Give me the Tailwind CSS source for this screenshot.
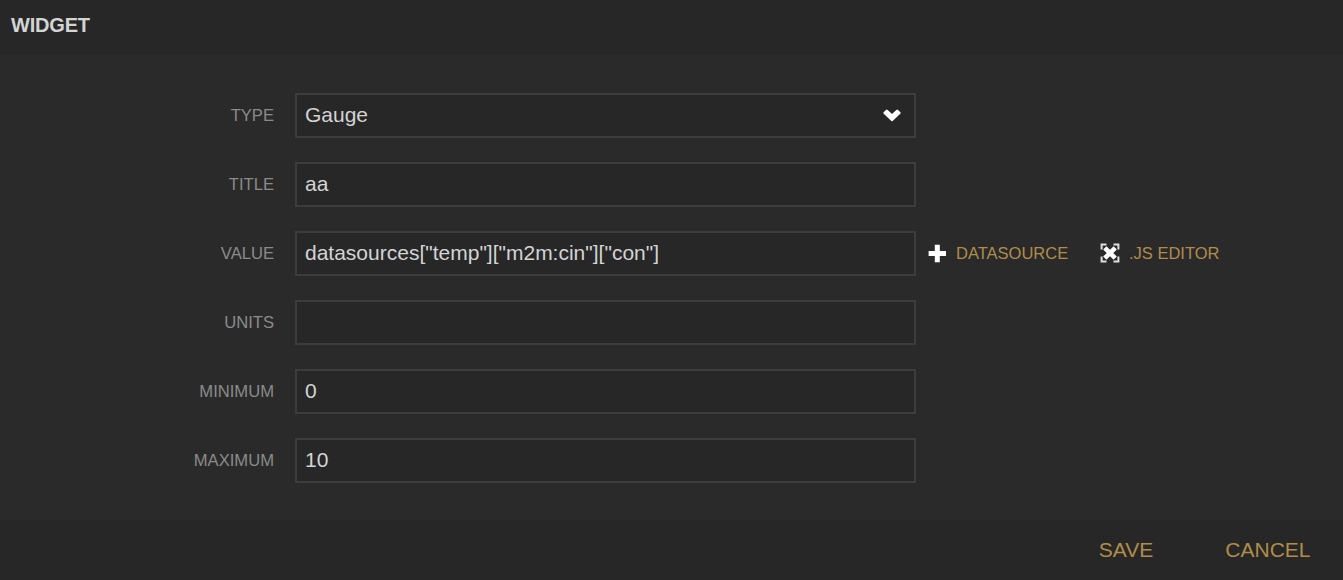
<!DOCTYPE html>
<html lang="en"><head><meta charset="utf-8"><title>Widget</title>
<script src="https://cdn.jsdelivr.net/npm/@tailwindcss/browser@4"></script></head>
<body class="h-[580px] w-[1343px] overflow-hidden bg-[#2a2a2a] font-['Liberation_Sans',Arial,sans-serif] text-[#d3d4d4] flex flex-col">
<header class="h-[55px] bg-[#272727] pl-[11px] pt-[10px]"><h1 class="text-[20px] leading-[30px] font-bold tracking-[-0.2px]">WIDGET</h1></header>
<main class="h-[465px] pt-[38px] flex flex-col gap-6">
<div class="flex h-[45px] items-center"><label class="w-[274px] pt-[2px] text-right text-[16.6px] text-[#8b8b8b]">TYPE</label><div class="ml-[21px] flex h-[45px] w-[621px] items-center justify-between border-2 border-[#3d3d3d] bg-[#272727] pb-[2px] pl-2 pr-3 text-[21px]"><span>Gauge</span><svg class="h-[14px] w-[20px]" viewBox="0 0 20 14"><path d="M1.500 4.300 4.300 1.700Q5 1.300 5.700 1.900L10 6l4.300-4.100Q15 1.300 15.700 1.700l2.800 2.600Q19 5 18.300 5.700L10.600 13Q10 13.500 9.400 13L1.700 5.700Q1 5 1.500 4.300Z" fill="#fff"/></svg></div></div>
<div class="flex h-[45px] items-center"><label class="w-[274px] pt-[2px] text-right text-[16.6px] text-[#8b8b8b]">TITLE</label><div class="ml-[21px] flex h-[45px] w-[621px] items-center border-2 border-[#3d3d3d] bg-[#272727] pb-[2px] pl-2 text-[21px]">aa</div></div>
<div class="flex h-[45px] items-center"><label class="w-[274px] pt-[2px] text-right text-[16.6px] text-[#8b8b8b]">VALUE</label><div class="ml-[21px] flex h-[45px] w-[621px] items-center border-2 border-[#3d3d3d] bg-[#272727] pb-[2px] pl-2 text-[21px]">datasources["temp"]["m2m:cin"]["con"]</div>
<svg class="ml-[12px] size-[19px]" viewBox="0 0 19 19"><path d="M9.300 .8v17.400M.6 9.500H18" stroke="#fff" stroke-width="5"/></svg><span class="ml-[9px] w-[112px] whitespace-nowrap text-[16.5px] text-[#b08d4a]">DATASOURCE</span>
<svg class="ml-[32px] mb-[1px] size-[20px]" viewBox="0 0 20 20"><path d="M1.600 6.500V1.600H6.500M13.500 1.600h4.900v4.900M18.400 13.500v4.900h-4.900M6.500 18.400H1.600v-4.900" fill="none" stroke="#dedede" stroke-width="2"/><path d="m4.800 4.800 10.400 10.400M15.200 4.800 4.800 15.200" stroke="#fff" stroke-width="4.600"/></svg><span class="ml-[9px] whitespace-nowrap text-[16.5px] text-[#b08d4a]">.JS EDITOR</span></div>
<div class="flex h-[45px] items-center"><label class="w-[274px] pt-[2px] text-right text-[16.6px] text-[#8b8b8b]">UNITS</label><div class="ml-[21px] h-[45px] w-[621px] border-2 border-[#3d3d3d] bg-[#272727]"></div></div>
<div class="flex h-[45px] items-center"><label class="w-[274px] pt-[2px] text-right text-[16.6px] text-[#8b8b8b]">MINIMUM</label><div class="ml-[21px] flex h-[45px] w-[621px] items-center border-2 border-[#3d3d3d] bg-[#272727] pb-[2px] pl-2 text-[21px]">0</div></div>
<div class="flex h-[45px] items-center"><label class="w-[274px] pt-[2px] text-right text-[16.6px] text-[#8b8b8b]">MAXIMUM</label><div class="ml-[21px] flex h-[45px] w-[621px] items-center border-2 border-[#3d3d3d] bg-[#272727] pb-[2px] pl-2 text-[21px]">10</div></div>
</main>
<footer class="flex h-[60px] items-center justify-end gap-[72px] bg-[#272727] pr-[32.500px] text-[21px] text-[#b08d4a]"><span>SAVE</span><span>CANCEL</span></footer>
</body></html>
